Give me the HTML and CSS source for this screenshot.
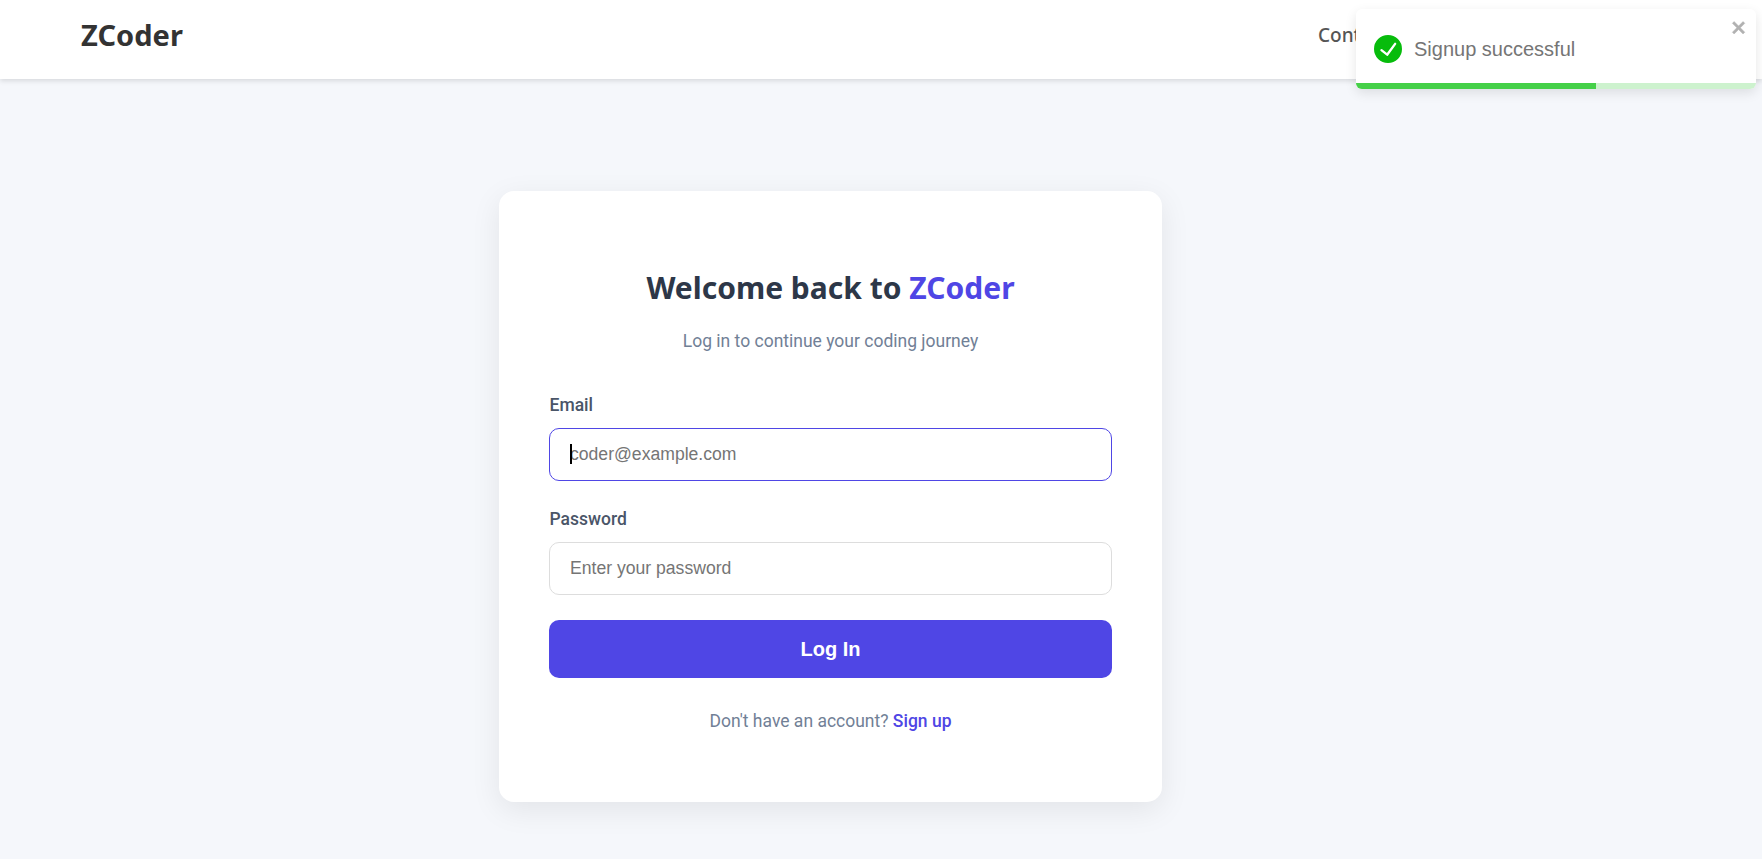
FILE: index.html
```html
<!DOCTYPE html>
<html lang="en">
<head>
<meta charset="utf-8">
<title>ZCoder</title>
<link rel="stylesheet" href="styles.css">
</head>
<body>
<header class="navbar">
  <div class="logo">ZCoder</div>
  <nav class="nav-links"><a class="nav-link">Contests</a></nav>
</header>
<main class="page">
  <form class="card">
    <h1 class="title">Welcome back to <span class="brand">ZCoder</span></h1>
    <p class="subtitle">Log in to continue your coding journey</p>
    <label class="label">Email</label>
    <div class="field focused"><span class="caret"></span><span class="placeholder">coder@example.com</span></div>
    <label class="label">Password</label>
    <div class="field"><span class="placeholder">Enter your password</span></div>
    <button class="submit" type="button">Log In</button>
    <p class="footer">Don't have an account? <a class="signup">Sign up</a></p>
  </form>
</main>
<div class="toast">
  <div class="toast-body">
    <svg class="check" viewBox="0 0 24 24"><path fill="#07bc0c" d="M12 0a12 12 0 1012 12A12.014 12.014 0 0012 0zm6.927 8.2l-6.845 9.289a1.011 1.011 0 01-1.43.188l-4.888-3.908a1 1 0 111.25-1.562l4.076 3.261 6.227-8.451a1 1 0 111.61 1.183z"/></svg>
    <span class="toast-text">Signup successful</span>
    <svg class="close" viewBox="0 0 14 16"><path fill="#000" stroke="#000" stroke-width=".4" fill-rule="evenodd" d="M7.71 8.23l3.75 3.75-1.48 1.48-3.75-3.75-3.75 3.75L1 11.98l3.75-3.75L1 4.48 2.48 3l3.75 3.75L9.98 3l1.48 1.48-3.75 3.75z"/></svg>
  </div>
  <div class="progress"><div class="progress-bar" style="width:60%"></div></div>
</div>
</body>
</html>
```
FILE: styles.css
```css
* { box-sizing: border-box; }
body {
  margin: 0;
  height: 859px;
  overflow: hidden;
  background: #f5f7fb;
  font-family: Roboto, sans-serif;
}
.navbar {
  position: relative;
  display: flex;
  justify-content: space-between;
  height: 79px;
  padding: 0 80px 0 81px;
  background: #fff;
  box-shadow: 0 2px 5px rgba(0, 0, 0, .12);
  font-family: "Noto Sans", sans-serif;
}
.logo { font-size: 29px; font-weight: 700; line-height: 70px; color: #333; }
.nav-links { width: 364px; }
.nav-link { font-size: 19px; font-weight: 500; line-height: 70px; color: #555; }
.page { display: flex; padding: 112px 0 0 499px; }
.card {
  width: 663px;
  height: 611px;
  padding: 74px 50px 0;
  border-radius: 15px;
  background: #fff;
  box-shadow: 0 8px 30px rgba(0, 0, 0, .08);
}
.title {
  margin: 0;
  font: 700 30px/46px "Noto Sans", sans-serif;
  text-align: center;
  color: #2d3748;
}
.brand { color: #4f46e5; }
.subtitle {
  margin: 16px 0 37px;
  font-size: 17.5px;
  line-height: 28px;
  text-align: center;
  color: #718096;
}
.label {
  display: block;
  height: 36px;
  padding-left: .5px;
  font-size: 17.5px;
  font-weight: 500;
  line-height: 26px;
  color: #4a5568;
}
.field {
  position: relative;
  display: flex;
  align-items: center;
  height: 53px;
  margin-bottom: 25px;
  padding: 0 20px 1px;
  border: 1px solid #ddd;
  border-radius: 10px;
}
.focused { border-color: #4f46e5; }
.caret { position: absolute; left: 20px; top: 15px; width: 2px; height: 20px; background: #000; }
.placeholder { font: 17.6px/20px "Liberation Sans", sans-serif; color: #757575; }
.submit {
  display: block;
  width: 100%;
  height: 58px;
  border: 0;
  border-radius: 10px;
  background: #4f46e5;
  font: 700 20px/24px "Liberation Sans", sans-serif;
  color: #fff;
}
.footer { margin: 29px 0 0; font-size: 17.5px; line-height: 28px; text-align: center; color: #718096; }
.signup { font-weight: 500; color: #4f46e5; }
.toast {
  position: absolute;
  top: 9px;
  left: 1356px;
  width: 400px;
  height: 80px;
  overflow: hidden;
  border-radius: 6px;
  background: #fff;
  box-shadow: 0 4px 12px rgba(0, 0, 0, .1);
}
.toast-body { display: flex; align-items: center; height: 74px; padding: 6px 18px 0; }
.check { width: 28px; height: 28px; margin-right: 12px; }
.toast-text { font: 20px/24px "Liberation Sans", sans-serif; color: #757575; }
.close { width: 17px; height: 19px; margin: -44px -10px 0 auto; opacity: .3; }
.progress { height: 6px; background: #cdf2ce; }
.progress-bar { height: 6px; background: #45d048; }
```
